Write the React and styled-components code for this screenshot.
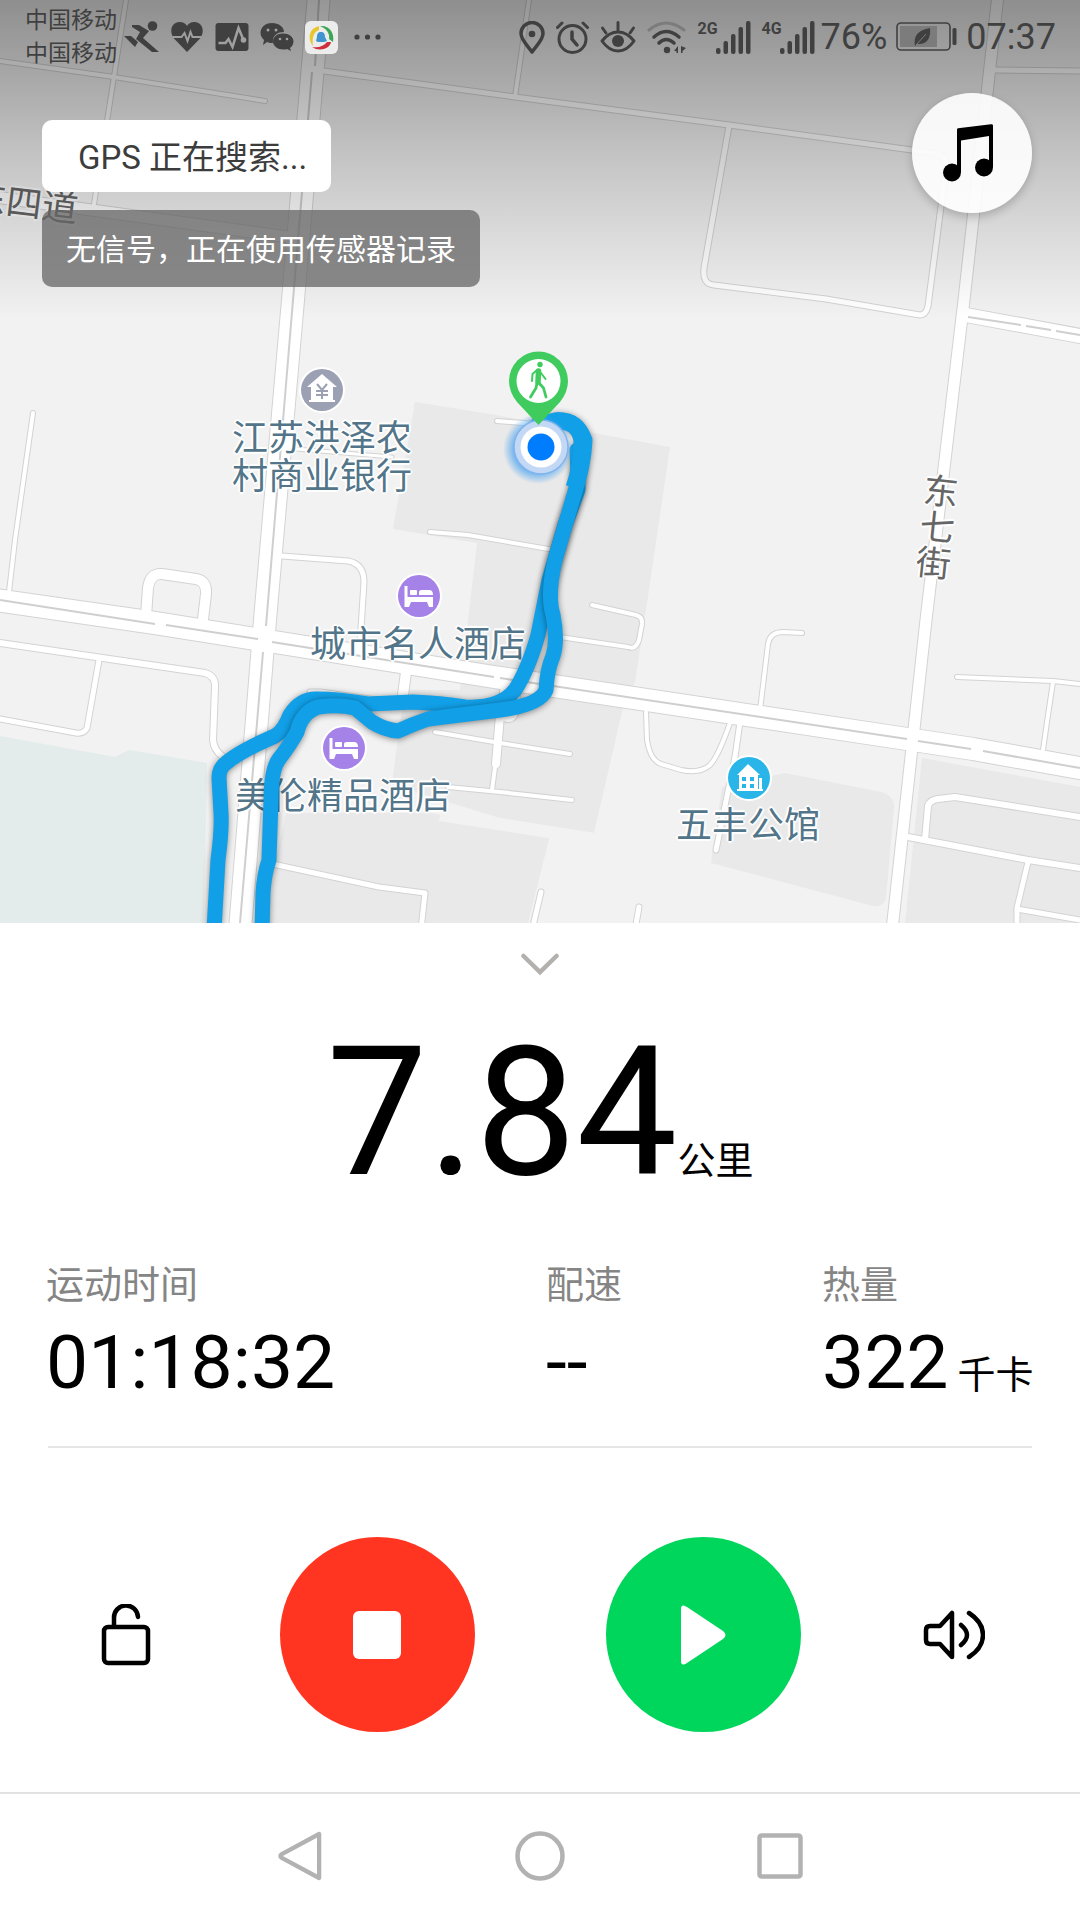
import React from "react";
import styled, { createGlobalStyle } from "styled-components";

const GlobalStyle = createGlobalStyle`
  * { box-sizing: border-box; }
  body {
    margin: 0;
    background: #fff;
    color: #000;
    font-family: Roboto, "Noto Sans CJK SC", sans-serif;
  }
  button {
    border: 0;
    padding: 0;
    background: none;
    font: inherit;
    color: inherit;
    cursor: pointer;
  }
  svg { display: block; }
`;

const INK = "#404040";

const Screen = styled.div`
  min-height: 100vh;
  display: flex;
  flex-direction: column;
`;

/* ---------- map ---------- */

const MapArea = styled.section`
  position: relative;
  width: 100%;
  aspect-ratio: 1080 / 923;
  overflow: hidden;
  background: #f2f2f2;
`;

const MapLayer = styled.svg`
  position: absolute;
  inset: 0;
  width: 100%;
  height: 100%;
`;

const Place = styled.div`
  position: absolute;
  left: ${(p) => (p.$x / 1080) * 100}%;
  top: ${(p) => (p.$y / 923) * 100}%;
  transform: translate(-50%, -50%) rotate(${(p) => p.$turn || 0}deg);
  font-size: 36px;
  line-height: 38px;
  text-align: center;
  white-space: pre;
  color: ${(p) => (p.$road ? "#666" : "#527589")};
  text-shadow: 2px 0 1px #fff, -2px 0 1px #fff, 0 2px 1px #fff, 0 -2px 1px #fff,
    1px 1px 1px #fff, -1px -1px 1px #fff;
`;

const StreetColumn = styled(Place)`
  font-size: 35px;
  line-height: 36px;
`;

const Overlay = styled.div`
  position: absolute;
  inset: 0;
  background: linear-gradient(
    rgba(0, 0, 0, 0.41) 0px,
    rgba(0, 0, 0, 0.31) 75px,
    rgba(0, 0, 0, 0.2) 150px,
    rgba(0, 0, 0, 0.1) 230px,
    rgba(0, 0, 0, 0) 320px
  );
`;

const StatusBar = styled.header`
  display: flex;
  align-items: center;
  justify-content: space-between;
  height: 74px;
  padding: 0 24px 0 25px;
  color: ${INK};
`;

const StatusGroup = styled.div`
  display: flex;
  align-items: center;
  gap: ${(p) => p.$gap}px;
`;

const Carriers = styled.div`
  font-size: 23px;
  line-height: 33px;
`;

const StatusText = styled.span`
  font-size: 36px;
  line-height: 36px;
`;

const Signal = styled.div`
  display: flex;
  align-items: flex-start;
  height: 33px;
`;

const Generation = styled.span`
  width: 18px;
  font-family: "Liberation Sans Narrow", Roboto, sans-serif;
  font-size: 16px;
  line-height: 16px;
  font-weight: 700;
`;

const MapControls = styled.div`
  display: flex;
  justify-content: space-between;
  align-items: flex-start;
  padding: 19px 48px 0 42px;
`;

const Notices = styled.div`
  display: flex;
  flex-direction: column;
  align-items: flex-start;
  gap: 18px;
  padding-top: 27px;
`;

const GpsNotice = styled.div`
  padding: 4px 24px 0 36px;
  border-radius: 10px;
  background: #fff;
  color: #3c3c3c;
  font-size: 33px;
  line-height: 68px;
`;

const SensorNotice = styled.div`
  padding: 2px 24px 0;
  border-radius: 10px;
  background: rgba(102, 102, 102, 0.75);
  color: #fff;
  font-size: 30px;
  line-height: 75px;
`;

const MusicButton = styled.button`
  display: grid;
  place-items: center;
  width: 120px;
  height: 120px;
  padding-right: 8px;
  border-radius: 50%;
  background: rgba(255, 255, 255, 0.9);
  box-shadow: 0 4px 10px rgba(0, 0, 0, 0.2);
`;

/* ---------- workout panel ---------- */

const Panel = styled.main`
  flex: 1;
  display: flex;
  flex-direction: column;
  padding: 0 46px;
`;

const CollapseButton = styled.button`
  align-self: center;
  display: grid;
  place-items: center;
  width: 120px;
  height: 82px;
`;

const Distance = styled.div`
  display: flex;
  justify-content: center;
  align-items: baseline;
  margin-top: 18px;
  font-size: 180px;
  line-height: 180px;
`;

const Unit = styled.span`
  margin-left: ${(p) => p.$gap || 0}px;
  font-size: 38px;
  line-height: 40px;
`;

const Stats = styled.dl`
  display: grid;
  grid-template-columns: 500fr 276fr 212fr;
  margin: 62px 0 46px;
`;

const Stat = styled.div`
  display: flex;
  flex-direction: column;
  gap: 19px;
`;

const StatLabel = styled.dt`
  font-size: 38px;
  line-height: 40px;
  color: #858585;
`;

const StatValue = styled.dd`
  display: flex;
  align-items: baseline;
  margin: 0;
  font-size: 75px;
  line-height: 76px;
  white-space: nowrap;
`;

const Divider = styled.hr`
  width: calc(100% - 4px);
  height: 2px;
  margin: 0 2px;
  border: 0;
  background: #e6e6e6;
`;

const Controls = styled.div`
  display: flex;
  align-items: center;
  justify-content: space-between;
  padding: 89px 30px 58px;
`;

const MainActions = styled.div`
  display: flex;
  gap: 131px;
`;

const SideButton = styled.button`
  display: grid;
  place-items: center;
  width: 100px;
  height: 100px;
`;

const RoundButton = styled.button`
  display: grid;
  place-items: center;
  width: 195px;
  height: 195px;
  border-radius: 50%;
  background: ${(p) => p.$color};
`;

const NavBar = styled.nav`
  display: flex;
  justify-content: center;
  padding-bottom: 2px;
  border-top: 2px solid #e2e2e2;
`;

const NavButton = styled.button`
  display: grid;
  place-items: center;
  width: 240px;
  height: 124px;
`;

/* ---------- map data ---------- */

const blocks = [
  "M415 402 L496 415 L670 447 L646 610 L635 682 L622 712 L594 833 L500 818 L392 785 L398 737 L405 690 L460 690 L477 543 L393 529 Z",
  "M286 813 L430 813 L550 835 L528 923 L262 923 Z",
  "M785 773 L881 792 Q895 796 894 808 L886 898 Q883 908 873 906 L711 863 L722 787 Z",
  "M922 758 L1080 787 L1080 923 L905 923 Z",
];

const roads = [
  [4, "M0 61 L114 77 L265 101"],
  [4, "M126 0 L94 204"],
  [11, "M-5 197 L77 208 L288 237"],
  [5, "M324 71 L515 97 L729 125 L912 150 L938 154"],
  [4, "M529 0 L515 97"],
  [5, "M729 126 L704 268 Q702 284 714 285 L826 299 L920 315 Q926 315 928 306 L946 168 Q948 157 936 154"],
  [5, "M995 70 L1080 71"],
  [14, "M966 315 L1080 336"],
  [4, "M33 413 L15 540 L9 592"],
  [10, "M146 616 L148 588 Q150 573 162 574 L196 579 Q207 581 206 594 L202 628"],
  [5, "M282 556 L348 561 Q364 564 364 582 L359 660"],
  [3, "M296 449 L392 457"],
  [4, "M430 532 L468 535 L560 551"],
  [4, "M497 421 L535 424"],
  [4, "M592 605 L636 615 Q643 617 642 624 L639 640 Q636 650 628 647 L560 637"],
  [4, "M802 633 L783 632 Q770 632 768 644 L760 710"],
  [4, "M646 712 L647 740 Q650 760 661 764 L681 770 Q700 774 710 765 Q718 757 730 723"],
  [5, "M740 722 L735 757 L716 850"],
  [4, "M957 677 L1053 681 L1080 684"],
  [4, "M1053 682 L1048 715 L1043 750"],
  [6, "M925 840 L928 806 Q930 800 938 799 L955 797 L1080 817"],
  [6, "M903 836 L1028 860 L1080 868"],
  [5, "M1028 862 L1017 908 L1017 930"],
  [5, "M1017 909 L1080 920"],
  [5, "M541 892 L532 930"],
  [5, "M639 907 L635 930"],
  [4, "M435 732 L500 743 L570 754"],
  [4, "M448 787 L500 792 L572 800"],
  [4, "M496 760 L492 790"],
  [8, "M500 715 L496 764"],
  [20, "M510 692 L508 712"],
  [10, "M407 665 L402 702"],
  [5, "M310 692 L320 692 L405 704"],
  [6, "M0 643 L205 673 Q216 676 215 688 L213 740 Q214 750 222 756"],
  [5, "M99 660 L87 728 Q84 734 76 733 L0 719"],
  [5, "M268 863 L379 887 L425 893 L421 930"],
  [22, "M-5 600 L155 623 L262 640 L494 677 L907 739 L973 749 L1085 769"],
  [22, "M319 -5 L293 300 L265 620 L240 930"],
  [11, "M998 -5 L964 300 L926 620 L892 930"],
];

const medians = [
  "M0 600 L155 624",
  "M166 625 L258 639",
  "M272 642 L494 677",
  "M500 678 L907 739",
  "M918 741 L971 749",
  "M983 751 L1080 768",
  "M319 0 L315 66",
  "M312 72 L293 300 L266 626",
  "M263 652 L240 923",
  "M968 317 L1021 325",
  "M1026 326 L1051 330",
  "M1056 331 L1080 335",
];

const track = [
  "M214 930 L218 860 Q222 830 221 813 L219 778 Q219 768 226 763 Q240 751 275 736 Q284 731 290 715 Q300 699 316 699 Q340 699 368 704 L413 702 Q440 703 465 707 Q500 709 515 690 Q528 670 538 635 Q544 605 549 580 L565 525 L578 490 Q578 470 577 450",
  "M262 930 L263 893 Q264 875 269 860 L271 800 Q271 770 279 759 Q290 745 297 732 Q302 712 318 707 Q340 704 355 708 L372 722 Q385 730 398 731 Q413 724 428 719 L500 710 Q540 705 546 690 Q547 670 553 656 Q558 640 553 615 Q547 595 555 560 L574 495 Q584 465 585 440 Q577 418 555 420 L538 424",
];

const Hotel = ({ x, y }) => (
  <g transform={`translate(${x} ${y})`}>
    <circle r="23" fill="#fff" />
    <circle r="21" fill="#a582e8" />
    <path d="M-13 -10 V11" stroke="#fff" strokeWidth="3" fill="none" />
    <path d="M-14 1 H14 V11 H10 L8 6 H-8 L-10 11 H-14 Z" fill="#fff" />
    <rect x="-9" y="-6" width="7" height="5" rx="1" fill="#fff" />
    <path d="M0 -1 V-4 Q0 -6 3 -6 H10 Q14 -6 14 -1 Z" fill="#fff" />
  </g>
);

const BaseMap = () => (
  <MapLayer viewBox="0 0 1080 923" preserveAspectRatio="none" aria-hidden="true">
    <path d="M0 736 L115 757 L129 750 L207 763 L204 923 L0 923 Z" fill="#e3eceb" />
    {blocks.map((d) => (
      <path key={d} d={d} fill="#e9e9e9" />
    ))}
    <path d="M440 815 L600 840" stroke="#f2f2f2" strokeWidth="12" />
    <g fill="none" stroke="#d3d3d3" strokeLinecap="round" strokeLinejoin="round">
      {roads.map(([w, d]) => (
        <path key={d} d={d} strokeWidth={w + 2} />
      ))}
    </g>
    <g fill="none" stroke="#fff" strokeLinecap="round" strokeLinejoin="round">
      {roads.map(([w, d]) => (
        <path key={d} d={d} strokeWidth={w} />
      ))}
    </g>
    <g fill="none" stroke="#cfcfcf" strokeWidth="2">
      {medians.map((d) => (
        <path key={d} d={d} />
      ))}
    </g>
    <g transform="translate(322 390)">
      <circle r="23" fill="#fff" />
      <circle r="21" fill="#9ba0b3" />
      <path d="M0 -16 L15 -3 H11 V10 H13 V12 H-13 V10 H-11 V-3 H-15 Z" fill="#fff" />
      <path
        d="M-5 -6 L0 0 L5 -6 M0 0 V9 M-6 1 H6 M-6 5 H6"
        stroke="#9ba0b3"
        strokeWidth="2"
        fill="none"
      />
    </g>
    <Hotel x={419} y={596} />
    <Hotel x={344} y={748} />
    <g transform="translate(749 778)">
      <circle r="23" fill="#fff" />
      <circle r="21" fill="#2ab5e9" />
      <path d="M-1 -14 L11 -3 H9 V11 H-10 V-3 H-12 Z" fill="#fff" />
      <path d="M10 0 H13 V11 H14 V13 H-12 V11 H10 Z" fill="#fff" />
      <path
        d="M-7 -1 h4 v4 h-4z M1 -1 h4 v4 h-4z M-7 6 h4 v4 h-4z M1 6 h4 v4 h-4z"
        fill="#2ab5e9"
      />
    </g>
  </MapLayer>
);

const TrackLine = styled.path`
  fill: none;
  stroke: #119fe7;
  stroke-width: 15px;
  stroke-linecap: round;
  stroke-linejoin: round;
  filter: drop-shadow(0 1px 3px rgba(0, 0, 0, 0.45));
`;

const TrackMap = () => (
  <MapLayer viewBox="0 0 1080 923" preserveAspectRatio="none" aria-hidden="true">
    <defs>
      <radialGradient id="glow">
        <stop offset="0.7" stopColor="#4aa3f0" stopOpacity="0.7" />
        <stop offset="1" stopColor="#4aa3f0" stopOpacity="0" />
      </radialGradient>
    </defs>
    {track.map((d) => (
      <TrackLine key={d} d={d} />
    ))}
    <path
      d="M556 421 Q578 420 582 440 Q582 465 574 488"
      fill="none"
      stroke="#119fe7"
      strokeWidth="17"
    />
    <circle cx="538" cy="449" r="35" fill="url(#glow)" />
    <circle cx="541" cy="447" r="27" fill="#c3d8f4" stroke="#7fb4ee" strokeWidth="1.5" />
    <circle cx="541" cy="447" r="20.5" fill="#fff" />
    <circle cx="541" cy="447" r="13.5" fill="#007dff" />
    <path
      d="M538.5 425 L517 402 Q509 392 509 381 A29.5 29.5 0 0 1 568 381 Q568 392 560 402 Z"
      fill="#40cb5f"
    />
    <circle cx="538.5" cy="381" r="22" fill="#fff" />
    <g fill="none" stroke="#40cb5f" strokeLinecap="round" strokeLinejoin="round">
      <circle cx="540" cy="364.5" r="2.7" fill="#40cb5f" stroke="none" />
      <path d="M538.5 371 L538 382" strokeWidth="5.5" />
      <path d="M537 383 L536 388 L530.5 397 M539 383 L543.5 388 L546 397" strokeWidth="2.8" />
      <path d="M537 370 L532.5 374 L532 381 M541 373 L545.5 379" strokeWidth="2" />
    </g>
  </MapLayer>
);

/* ---------- status icons ---------- */

const RunnerIcon = () => (
  <svg width="35" height="32" viewBox="0 0 35 32">
    <circle cx="28.5" cy="5" r="4.8" fill={INK} />
    <path d="M8 4 H15 L25 10 L19 17 L35 31 H28 L12 18 L16 11 L8 6 Z" fill={INK} />
    <path d="M0 15 H7 L14 21 L11 26 Z" fill={INK} />
  </svg>
);

const HeartIcon = () => (
  <svg width="34" height="32" viewBox="0 0 33 32">
    <path
      d="M16.5 31 L3 17 C-2 9 2 1 9 1 C13 1 15.5 3 16.5 5 C17.5 3 20 1 24 1 C31 1 35 9 30 17 Z"
      fill={INK}
    />
    <path d="M2 16 H11 L14 12 L17 20 L20 11 L22 16 H31" fill="none" stroke="#a0a0a0" strokeWidth="2" />
  </svg>
);

const PulseIcon = () => (
  <svg width="34" height="28" viewBox="0 0 33 28">
    <rect width="33" height="28" rx="3" fill={INK} />
    <path d="M3 20 H10 L13 16 L17 24 L23 5 L28 17" fill="none" stroke="#a0a0a0" strokeWidth="2.5" />
    <circle cx="28" cy="17" r="2.8" fill="#a0a0a0" />
  </svg>
);

const ChatIcon = () => (
  <svg width="34" height="30" viewBox="0 0 34 30">
    <path
      d="M12 1 C19 1 24 5 24 10 C17 10 12 14 13 21 C11 21 9 21 7 20 L3 23 L4 18 C-3 12 1 1 12 1 Z"
      fill={INK}
    />
    <path
      d="M23 11.5 C29 11.5 33.5 15 33.5 19.5 C33.5 22 32 24.5 30 26 L31 29 L27 27 C20 29 13 25 13 19.5 C13 15 17 11.5 23 11.5 Z"
      fill={INK}
    />
    <g fill="#a0a0a0">
      <circle cx="8" cy="8" r="1.5" />
      <circle cx="16" cy="8" r="1.5" />
      <circle cx="20" cy="17" r="1.3" />
      <circle cx="27" cy="17" r="1.3" />
    </g>
  </svg>
);

const AppIcon = () => (
  <svg width="33" height="33" viewBox="0 0 33 33">
    <rect width="33" height="33" rx="6" fill="#ececec" />
    <path d="M14 5 C4 7 2 18 8 25 C7 18 8 11 14 9 Z" fill="#e8c62e" />
    <path d="M15 5 C24 4 30 12 28 21 L24 18 C25 13 22 8 15 5 Z" fill="#3aa757" />
    <path d="M26 21 C25 28 14 31 7 26 C14 27 19 25 22 21 Z" fill="#cf2f3a" />
    <path d="M16 11 C19 11 20 13 20 16 L22 20 L19 21 H13 L11 20 L12 16 C12 13 13 11 16 11 Z" fill="#3f95cf" />
  </svg>
);

const MoreIcon = () => (
  <svg width="35" height="6" viewBox="0 0 35 6" fill={INK}>
    <circle cx="8" cy="3" r="2.6" />
    <circle cx="18.5" cy="3" r="2.6" />
    <circle cx="29" cy="3" r="2.6" />
  </svg>
);

const PinIcon = () => (
  <svg width="26" height="33" viewBox="0 0 26 33">
    <path
      d="M13 31 C9 25 2 19 2 12.5 A11 11 0 0 1 24 12.5 C24 19 17 25 13 31 Z"
      fill="none"
      stroke={INK}
      strokeWidth="3.5"
      strokeLinejoin="round"
    />
    <circle cx="13" cy="13" r="3.3" fill={INK} />
  </svg>
);

const AlarmIcon = () => (
  <svg width="33" height="33" viewBox="0 0 33 33" fill="none" stroke={INK} strokeLinecap="round">
    <circle cx="16.5" cy="18" r="13.5" strokeWidth="3" />
    <path d="M16 11 V18 L21 24" strokeWidth="3.5" />
    <path d="M1.5 6.5 L6 2 M27 2 L31.5 6.5" strokeWidth="3" />
  </svg>
);

const EyeIcon = () => (
  <svg width="36" height="32" viewBox="0 0 36 32" fill="none" stroke={INK} strokeLinecap="round">
    <path d="M2 20 Q9 11 18 11 Q27 11 34 20 Q27 30 18 30 Q9 30 2 20 Z" strokeWidth="3" strokeLinejoin="round" />
    <circle cx="18" cy="20" r="6" fill={INK} stroke="none" />
    <path d="M18 1.5 V9 M2.5 7 L6 12 M33.5 7 L30 12" strokeWidth="3" />
  </svg>
);

const WifiIcon = () => (
  <svg width="40" height="33" viewBox="0 0 40 33" fill="none" strokeLinecap="round">
    <path d="M2 9 Q19 -5 37 9" stroke="#7c7c7c" strokeWidth="3" />
    <path d="M7 16 Q19 5 32 16" stroke={INK} strokeWidth="3.5" />
    <path d="M12 22 Q19 15 27 22" stroke={INK} strokeWidth="3.5" />
    <circle cx="20" cy="29" r="3.2" fill={INK} />
    <path d="M31 25 V32 H29.5 V30 H27 Z M34 32 V25 L39 27 L35.5 30 V32 Z" fill={INK} />
  </svg>
);

const SignalBars = () => (
  <svg width="35" height="33" viewBox="0 0 35 33" fill={INK}>
    <rect x="0" y="27" width="4.5" height="6" rx="2" />
    <rect x="7.5" y="20" width="4.5" height="13" rx="2" />
    <rect x="15" y="13" width="4.5" height="20" rx="2" />
    <rect x="22.5" y="6" width="4.5" height="27" rx="2" />
    <rect x="30" y="0" width="4.5" height="33" rx="2" />
  </svg>
);

const BatteryIcon = () => (
  <svg width="61" height="30" viewBox="0 0 61 30">
    <rect x="1" y="1" width="53" height="27" rx="4" fill="none" stroke={INK} strokeWidth="1.6" />
    <rect x="4" y="4" width="37" height="21" fill="#7c7c7c" />
    <path d="M34 6 C35 15 32 23 21 22 L19 24 C17 14 22 8 34 6 Z" fill={INK} />
    <path d="M20 23 L30 12" stroke="#7c7c7c" strokeWidth="1" />
    <rect x="56.5" y="6" width="4" height="17" rx="1.5" fill={INK} />
  </svg>
);

const NoteIcon = () => (
  <svg width="50" height="58" viewBox="0 0 50 58">
    <path d="M14 5.5 Q14 4.5 15 4.3 L48 0.2 Q50 0 50 1.5 V43 H46 V12 L18 16.5 V48 H14 Z" />
    <circle cx="9" cy="48.5" r="9" />
    <circle cx="41" cy="43.5" r="9" />
  </svg>
);

export default function App() {
  return (
    <Screen>
      <GlobalStyle />
      <MapArea>
        <BaseMap />
        <Place $x={322} $y={458}>{"江苏洪泽农\n村商业银行"}</Place>
        <Place $x={418} $y={645}>城市名人酒店</Place>
        <Place $x={343} $y={797}>美伦精品酒店</Place>
        <Place $x={748} $y={826}>五丰公馆</Place>
        <StreetColumn $x={937} $y={529} $turn={6} $road>{"东\n七\n街"}</StreetColumn>
        <Place $x={24} $y={204} $turn={7} $road>东四道</Place>
        <TrackMap />
        <Overlay>
          <StatusBar>
            <StatusGroup $gap={7}>
              <Carriers>
                <div>中国移动</div>
                <div>中国移动</div>
              </Carriers>
              <StatusGroup $gap={11}>
                <RunnerIcon />
                <HeartIcon />
                <PulseIcon />
                <ChatIcon />
                <AppIcon />
                <MoreIcon />
              </StatusGroup>
            </StatusGroup>
            <StatusGroup $gap={6}>
              <StatusGroup $gap={11}>
                <PinIcon />
                <AlarmIcon />
                <EyeIcon />
                <WifiIcon />
                <Signal>
                  <Generation>2G</Generation>
                  <SignalBars />
                </Signal>
                <Signal>
                  <Generation>4G</Generation>
                  <SignalBars />
                </Signal>
              </StatusGroup>
              <StatusGroup $gap={9}>
                <StatusText>76%</StatusText>
                <BatteryIcon />
                <StatusText>07:37</StatusText>
              </StatusGroup>
            </StatusGroup>
          </StatusBar>
          <MapControls>
            <Notices>
              <GpsNotice>GPS 正在搜索...</GpsNotice>
              <SensorNotice>无信号，正在使用传感器记录</SensorNotice>
            </Notices>
            <MusicButton type="button" aria-label="音乐">
              <NoteIcon />
            </MusicButton>
          </MapControls>
        </Overlay>
      </MapArea>

      <Panel>
        <CollapseButton type="button" aria-label="收起">
          <svg width="38" height="24" viewBox="0 0 38 24" fill="none" stroke="#b3b0ae" strokeWidth="4.5" strokeLinecap="round">
            <path d="M2.5 4 L19 20 L35.5 4" />
          </svg>
        </CollapseButton>
        <Distance>
          7.84<Unit>公里</Unit>
        </Distance>
        <Stats>
          <Stat>
            <StatLabel>运动时间</StatLabel>
            <StatValue>01:18:32</StatValue>
          </Stat>
          <Stat>
            <StatLabel>配速</StatLabel>
            <StatValue>--</StatValue>
          </Stat>
          <Stat>
            <StatLabel>热量</StatLabel>
            <StatValue>
              322<Unit $gap={9}>千卡</Unit>
            </StatValue>
          </Stat>
        </Stats>
        <Divider />
        <Controls>
          <SideButton type="button" aria-label="锁定">
            <svg width="50" height="62" viewBox="0 0 50 62" fill="none" stroke="#000" strokeWidth="4.5" strokeLinecap="round">
              <rect x="3" y="23" width="44" height="36" rx="4" />
              <path d="M13 22 V14 A12 12 0 0 1 37 13" />
            </svg>
          </SideButton>
          <MainActions>
            <RoundButton type="button" aria-label="结束" $color="#ff3522">
              <svg width="48" height="48" viewBox="0 0 48 48">
                <rect width="48" height="48" rx="6" fill="#fff" />
              </svg>
            </RoundButton>
            <RoundButton type="button" aria-label="继续" $color="#00d65b">
              <svg width="46" height="60" viewBox="0 0 46 60">
                <path d="M1 4 Q1 -2 7 2 L43 26 Q48 30 43 34 L7 58 Q1 62 1 56 Z" fill="#fff" />
              </svg>
            </RoundButton>
          </MainActions>
          <SideButton type="button" aria-label="声音">
            <svg width="62" height="52" viewBox="0 0 62 52" fill="none" stroke="#000" strokeWidth="4.5" strokeLinecap="round" strokeLinejoin="round">
              <path d="M29 4 V48 L17 35 H7 Q3 35 3 31 V21 Q3 17 7 17 H17 Z" />
              <path d="M38 16 Q50 26 38 36 M46 4 Q60 13 60 26 Q60 39 46 48" />
            </svg>
          </SideButton>
        </Controls>
      </Panel>

      <NavBar>
        <NavButton type="button" aria-label="返回">
          <svg width="44" height="50" viewBox="0 0 46 52" fill="none" stroke="#b2b2b2" strokeWidth="4.5" strokeLinejoin="round">
            <path d="M43 3 V49 L4 28 Q1 26 4 24 Z" />
          </svg>
        </NavButton>
        <NavButton type="button" aria-label="主页">
          <svg width="50" height="50" viewBox="0 0 50 50" fill="none" stroke="#b2b2b2" strokeWidth="4.5">
            <circle cx="25" cy="25" r="22.5" />
          </svg>
        </NavButton>
        <NavButton type="button" aria-label="最近任务">
          <svg width="46" height="46" viewBox="0 0 46 46" fill="none" stroke="#b2b2b2" strokeWidth="4.5">
            <rect x="2.5" y="2.5" width="41" height="41" rx="2" />
          </svg>
        </NavButton>
      </NavBar>
    </Screen>
  );
}
